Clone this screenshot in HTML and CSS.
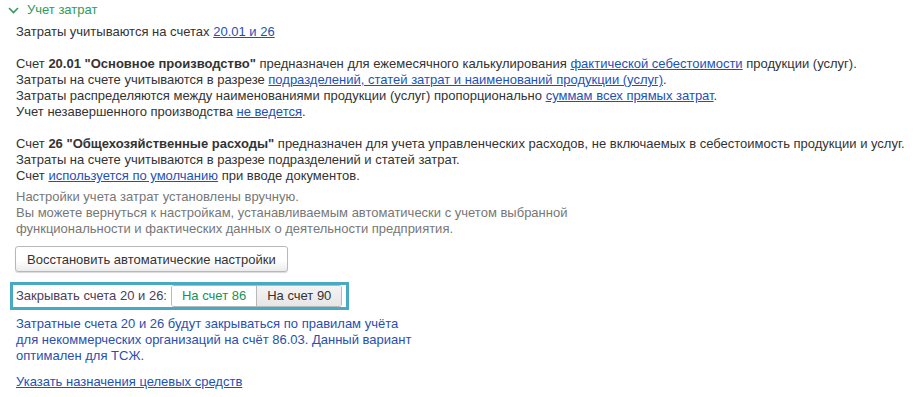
FILE: index.html
```html
<!DOCTYPE html>
<html lang="ru">
<head>
    <meta charset="UTF-8">
    <title>Учет затрат</title>
    <link rel="stylesheet" href="styles.css">
</head>
<body>
    <div class="group">
        <div class="group-title">
            <svg class="chevron" width="11" height="7" viewBox="0 0 11 7"><path d="M1 1 L5.5 5.5 L10 1" fill="none" stroke="#2e9c5b" stroke-width="1.6"/></svg>
            <span>Учет затрат</span>
        </div>

        <div class="content">
            <p class="first">Затраты учитываются на счетах <a href="#">20.01 и 26</a></p>

            <p>Счет <b>20.01 "Основное производство"</b> предназначен для ежемесячного калькулирования <a href="#">фактической себестоимости</a> продукции (услуг).<br>
            Затраты на счете учитываются в разрезе <a href="#">подразделений, статей затрат и наименований продукции (услуг)</a>.<br>
            Затраты распределяются между наименованиями продукции (услуг) пропорционально <a href="#">суммам всех прямых затрат</a>.<br>
            Учет незавершенного производства <a href="#">не ведется</a>.</p>

            <p>Счет <b>26 "Общехозяйственные расходы"</b> предназначен для учета управленческих расходов, не включаемых в себестоимость продукции и услуг.<br>
            Затраты на счете учитываются в разрезе подразделений и статей затрат.<br>
            Счет <a href="#">используется по умолчанию</a> при вводе документов.</p>

            <p class="note">Настройки учета затрат установлены вручную.<br>
            Вы можете вернуться к настройкам, устанавливаемым автоматически с учетом выбранной<br>
            функциональности и фактических данных о деятельности предприятия.</p>

            <div class="btn-row">
                <button class="btn">Восстановить автоматические настройки</button>
            </div>

            <div class="close-row">
                <span class="close-label">Закрывать счета 20 и 26:</span>
                <div class="toggle">
                    <span class="toggle-item active">На счет 86</span>
                    <span class="toggle-item">На счет 90</span>
                </div>
            </div>

            <p class="info">Затратные счета 20 и 26 будут закрываться по правилам учёта<br>
            для некоммерческих организаций на счёт 86.03. Данный вариант<br>
            оптимален для ТСЖ.</p>

            <p class="last"><a href="#">Указать назначения целевых средств</a></p>
        </div>
    </div>
</body>
</html>
```

FILE: styles.css
```css
body {
    margin: 0;
    background: #fff;
    font-family: Arial, "Liberation Sans", sans-serif;
    font-size: 13px;
    line-height: 16px;
    color: #333;
}

.group {
    padding-top: 2px;
}

.group-title {
    display: flex;
    align-items: center;
    gap: 8px;
    padding-left: 8px;
    height: 16px;
    color: #2e9c5b;
}

.content {
    padding-left: 16px;
}

p {
    margin: 0;
}

.content p.first {
    margin-top: 6px;
}

.content p + p {
    margin-top: 16px;
}

.content p.note {
    margin-top: 5px;
    color: #777;
}

a {
    color: #1d52b5;
    text-decoration: underline;
}

.btn-row {
    margin-top: 9px;
}

.btn {
    display: block;
    margin-left: -1px;
    height: 26px;
    padding: 0 11px;
    font-family: inherit;
    font-size: 13px;
    color: #333;
    border: 1px solid #b8b8b8;
    border-radius: 3px;
    background: linear-gradient(#fff 0%, #fff 55%, #ececec 100%);
    box-shadow: 0 1px 1px rgba(0,0,0,0.15);
}

.close-row {
    display: flex;
    align-items: center;
    gap: 4px;
    width: max-content;
    margin: 10px 0 0 -6px;
    padding: 0 4px 0 3px;
    height: 22px;
    border: 3px solid #48a9c3;
}

.close-label {
    color: #4d3d5a;
}

.toggle {
    display: flex;
    height: 22px;
    border: 1px solid #b8b8b8;
    border-radius: 3px;
    box-sizing: border-box;
    overflow: hidden;
}

.toggle-item {
    display: flex;
    align-items: center;
    padding: 0 10px;
    color: #333;
    background: linear-gradient(#f4f4f4, #e6e6e6);
}

.toggle-item + .toggle-item {
    border-left: 1px solid #b8b8b8;
}

.toggle-item.active {
    color: #14925a;
    background: #fff;
}

.content p.info {
    margin-top: 6px;
    color: #2a4fad;
}

.content p.last {
    margin-top: 10px;
}
```
